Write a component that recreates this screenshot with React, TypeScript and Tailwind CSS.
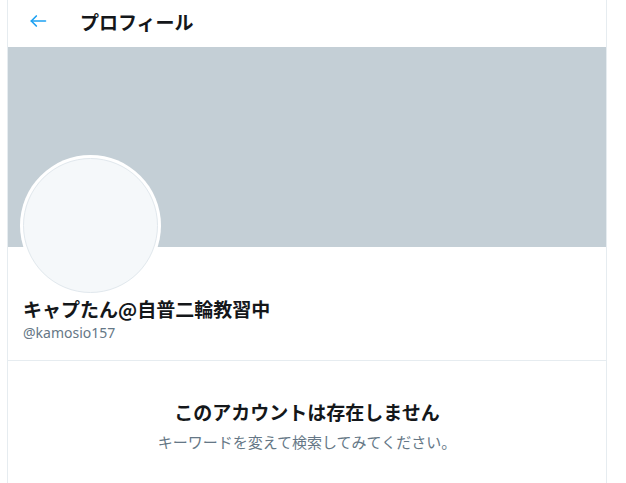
import React from "react";

export default function App() {
  const font = { fontFamily: '"Noto Sans CJK JP", "Noto Sans", sans-serif' };
  return (
    <div className="w-[626px] h-[483px] bg-white overflow-hidden" style={font}>
      <div className="ml-[7px] w-[600px] h-[483px] border-x border-[#e6ecf0] flex flex-col">
        <div className="h-[47px] pb-[5px] flex items-center shrink-0">
          <div className="w-[72px] pl-[20px] flex items-center">
            <svg width="20" height="20" viewBox="0 0 24 24" fill="none" stroke="#1da1f2" strokeWidth="2" strokeLinecap="round" strokeLinejoin="round">
              <path d="M21 12H4" />
              <path d="M10 6l-6 6 6 6" />
            </svg>
          </div>
          <div className="text-[19px] font-bold text-[#14171a] leading-none">プロフィール</div>
        </div>
        <div className="h-[200px] bg-[#c4cfd6] shrink-0" />
        <div className="relative px-[15px] h-[114px] border-b border-[#e6ecf0] shrink-0">
          <div className="absolute left-[12px] top-[-92px] w-[141px] h-[141px] rounded-full bg-white p-[3px]">
            <div className="w-full h-full rounded-full bg-[#f5f8fa] border border-[#e1e8ed]" />
          </div>
          <div className="pt-[50px]">
            <div className="text-[19px] font-bold text-[#14171a] leading-[24px]">キャプたん@自普二輪教習中</div>
            <div className="mt-[3px] text-[14px] text-[#657786] leading-[18px]" style={{ fontFamily: '"Noto Sans", sans-serif' }}>@kamosio157</div>
          </div>
        </div>
        <div className="flex flex-col items-center pt-[38px]">
          <div className="text-[19px] font-bold text-[#14171a] leading-[26px]">このアカウントは存在しません</div>
          <div className="mt-[7px] text-[15px] text-[#657786] leading-[20px]">キーワードを変えて検索してみてください。</div>
        </div>
      </div>
    </div>
  );
}
